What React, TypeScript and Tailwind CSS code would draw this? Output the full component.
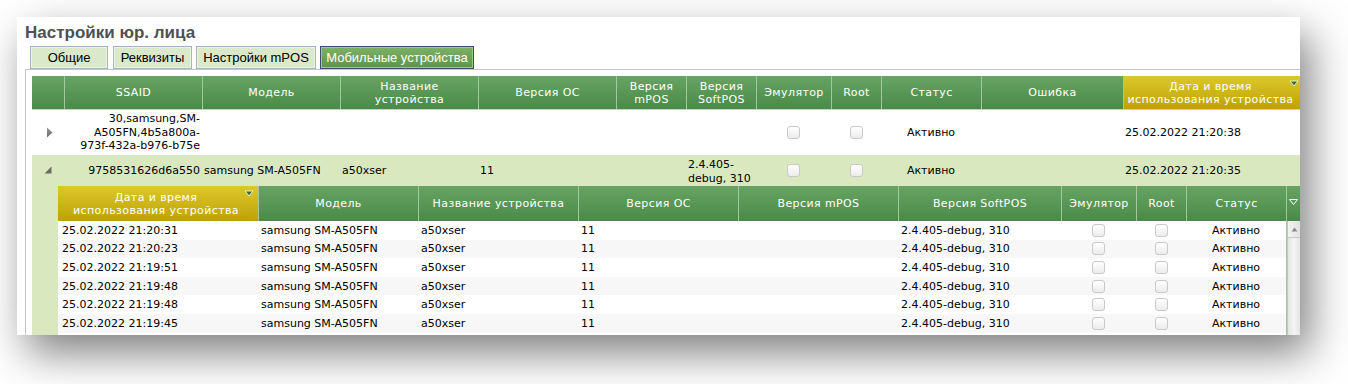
import React from "react";

const mainCols =
  "grid grid-cols-[32px_138px_138px_138px_138px_70px_70px_75px_50px_100px_142px_180px]";
const subCols = "grid grid-cols-[200px_160px_160px_160px_160px_163px_75px_50px_100px]";

const headGreen = "bg-gradient-to-b from-[#67a463] to-[#4a8a48]";
const headGold = "bg-gradient-to-b from-[#dcc829] to-[#bfa200]";
const sep = "border-l border-[#a6c6a0]";

function SortMark() {
  return (
    <svg width="10" height="7" viewBox="0 0 10 7" className="absolute right-[4px] top-[4px]">
      <polygon points="1,1 9,1 5,6" fill="#3c6a2e" stroke="#e8f2dc" strokeWidth="1" />
    </svg>
  );
}

function Check() {
  return (
    <span className="inline-block h-[13px] w-[13px] rounded-[3px] border border-[#c9c9c9] bg-gradient-to-b from-white to-[#ececec]" />
  );
}

const tabs = [
  { label: "Общие", w: "w-[78px]" },
  { label: "Реквизиты", w: "w-[79px]" },
  { label: "Настройки mPOS", w: "w-[120px]" },
  { label: "Мобильные устройства", w: "w-[154px]", active: true },
];

// the last row only peeks in under the window edge, its text is not visible
const subRows = [
  "25.02.2022 21:20:31",
  "25.02.2022 21:20:23",
  "25.02.2022 21:19:51",
  "25.02.2022 21:19:48",
  "25.02.2022 21:19:48",
  "25.02.2022 21:19:45",
  "",
];

export default function App() {
  return (
    <div className="h-[384px] w-[1348px] bg-white pl-[17px] pt-[17px]">
      <div className="h-[318px] w-[1283px] overflow-hidden bg-white shadow-[10px_18px_40px_rgba(0,0,0,0.5)]">
        {/* title */}
        <div className="h-[29px] pl-[8px] pt-[6px] font-['Liberation_Sans',Arial,sans-serif] text-[17px] font-bold leading-[20px] text-[#505050]">
          Настройки юр. лица
        </div>

        {/* tabs */}
        <div className="flex h-[23px] gap-[4px] pl-[13px] font-['Liberation_Sans',Arial,sans-serif] text-[13px]">
          {tabs.map((t, i) => (
            <div
              key={t.label}
              className={`${t.w} ${i === 0 ? "mr-[1px]" : ""} flex items-center justify-center border ${
                t.active
                  ? "border-[#3b4d6e] bg-gradient-to-b from-[#7db166] to-[#5d9548] text-white shadow-[inset_0_0_0_1px_#9cc88a]"
                  : "border-[#a7b3c7] bg-[#d9e9c9] text-black shadow-[inset_0_0_0_1px_#eaf4df]"
              }`}
            >
              {t.label}
            </div>
          ))}
        </div>

        {/* panel */}
        <div className="ml-[8px] h-[300px] border-l border-t border-[#c6c6c6] pl-[6px] pt-[6px] font-['DejaVu_Sans',Verdana,sans-serif] text-[11px] text-black">
          {/* main header */}
          <div className={`${mainCols} h-[34px] border-b border-[#c5d4c2] leading-[13px] tracking-[0.4px] text-white`}>
            <div className={headGreen} />
            {[
              "SSAID",
              "Модель",
              "Название\nустройства",
              "Версия ОС",
              "Версия\nmPOS",
              "Версия\nSoftPOS",
              "Эмулятор",
              "Root",
              "Статус",
              "Ошибка",
            ].map((h) => (
              <div
                key={h}
                className={`${headGreen} ${sep} flex items-center justify-center whitespace-pre-line text-center`}
              >
                {h}
              </div>
            ))}
            <div className={`${headGold} ${sep} relative flex items-center justify-center whitespace-pre-line pr-[6px] text-center`}>
              {"Дата и время\nиспользования устройства"}
              <SortMark />
            </div>
          </div>

          {/* row 1 */}
          <div className={`${mainCols} h-[45px] items-center bg-white leading-[13.5px]`}>
            <div className="flex justify-center pl-[2px]">
              <svg width="7" height="11" viewBox="0 0 7 11">
                <defs>
                  <linearGradient id="g1" x1="0" y1="0" x2="0" y2="1">
                    <stop offset="0" stopColor="#9a9a9a" />
                    <stop offset="1" stopColor="#6a6a6a" />
                  </linearGradient>
                </defs>
                <polygon points="1,0.5 6.5,5.5 1,10.5" fill="url(#g1)" />
              </svg>
            </div>
            <div className="pr-[2px] text-right">
              30,samsung,SM-
              <br />
              A505FN,4b5a800a-
              <br />
              973f-432a-b976-b75e
            </div>
            <div />
            <div />
            <div />
            <div />
            <div />
            <div className="flex justify-center">
              <Check />
            </div>
            <div className="flex justify-center">
              <Check />
            </div>
            <div className="text-center">Активно</div>
            <div />
            <div className="pl-[2px]">25.02.2022 21:20:38</div>
          </div>

          {/* row 2 */}
          <div className={`${mainCols} h-[31px] items-center bg-[#dae8bf] leading-[14px]`}>
            <div className="flex justify-center">
              <svg width="8" height="8" viewBox="0 0 8 8" className="mt-[-2px]">
                <polygon points="7.5,0.5 7.5,7.5 0.5,7.5" fill="#6b6b6b" />
              </svg>
            </div>
            <div className="pr-[2px] text-right">9758531626d6a550</div>
            <div className="pl-[2px]">samsung SM-A505FN</div>
            <div className="pl-[2px]">a50xser</div>
            <div className="pl-[2px]">11</div>
            <div />
            <div className="pl-[2px] pt-[2px]">
              2.4.405-
              <br />
              debug, 310
            </div>
            <div className="flex justify-center">
              <Check />
            </div>
            <div className="flex justify-center">
              <Check />
            </div>
            <div className="text-center">Активно</div>
            <div />
            <div className="pl-[2px]">25.02.2022 21:20:35</div>
          </div>

          {/* detail grid */}
          <div className="bg-[#dae8bf] pl-[26px]">
            <div className="flex">
              <div className="w-[1228px]">
                <div className={`${subCols} h-[35px] leading-[13px] tracking-[0.4px] text-white`}>
                  <div className={`${headGold} relative flex items-center justify-center whitespace-pre-line pr-[4px] text-center`}>
                    {"Дата и время\nиспользования устройства"}
                    <SortMark />
                  </div>
                  {[
                    "Модель",
                    "Название устройства",
                    "Версия ОС",
                    "Версия mPOS",
                    "Версия SoftPOS",
                    "Эмулятор",
                    "Root",
                    "Статус",
                  ].map((h) => (
                    <div key={h} className={`${headGreen} ${sep} flex items-center justify-center text-center`}>
                      {h}
                    </div>
                  ))}
                </div>
                {subRows.map((d, i) => (
                  <div
                    key={i}
                    className={`${subCols} h-[18.6px] items-center leading-[14px] ${
                      i % 2 === 0 ? "bg-white" : "bg-[#f7f7f7]"
                    }`}
                  >
                    <div className="pl-[4px] pt-[1px]">{d}</div>
                    <div className="pl-[3px] pt-[1px]">{d && "samsung SM-A505FN"}</div>
                    <div className="pl-[3px] pt-[1px]">{d && "a50xser"}</div>
                    <div className="pl-[3px] pt-[1px]">{d && "11"}</div>
                    <div />
                    <div className="pl-[3px] pt-[1px]">{d && "2.4.405-debug, 310"}</div>
                    <div className="flex justify-center">
                      <Check />
                    </div>
                    <div className="flex justify-center">
                      <Check />
                    </div>
                    <div className="pt-[1px] text-center">{d && "Активно"}</div>
                  </div>
                ))}
              </div>

              {/* scroll column */}
              <div className="w-[14px] border-l border-[#a6c6a0]">
                <div className={`${headGreen} flex h-[35px] justify-center pt-[13px]`}>
                  <svg width="9" height="6" viewBox="0 0 9 6">
                    <polygon points="0.5,0.5 8.5,0.5 4.5,5.5" fill="none" stroke="#ffffff" strokeWidth="1" />
                  </svg>
                </div>
                <div className="h-[200px] border-l border-[#c4c4c4] bg-gradient-to-r from-[#e4e4e4] via-[#f5f5f5] to-[#e4e4e4]">
                  <div className="flex h-[17px] items-center justify-center border-b border-[#c8c8c8] bg-gradient-to-r from-[#f3f3f3] to-[#e2e2e2]">
                    <svg width="7" height="5" viewBox="0 0 7 5">
                      <polygon points="3.5,0.5 6.5,4.5 0.5,4.5" fill="#8a8a8a" />
                    </svg>
                  </div>
                </div>
              </div>
            </div>
          </div>
        </div>
      </div>
    </div>
  );
}
